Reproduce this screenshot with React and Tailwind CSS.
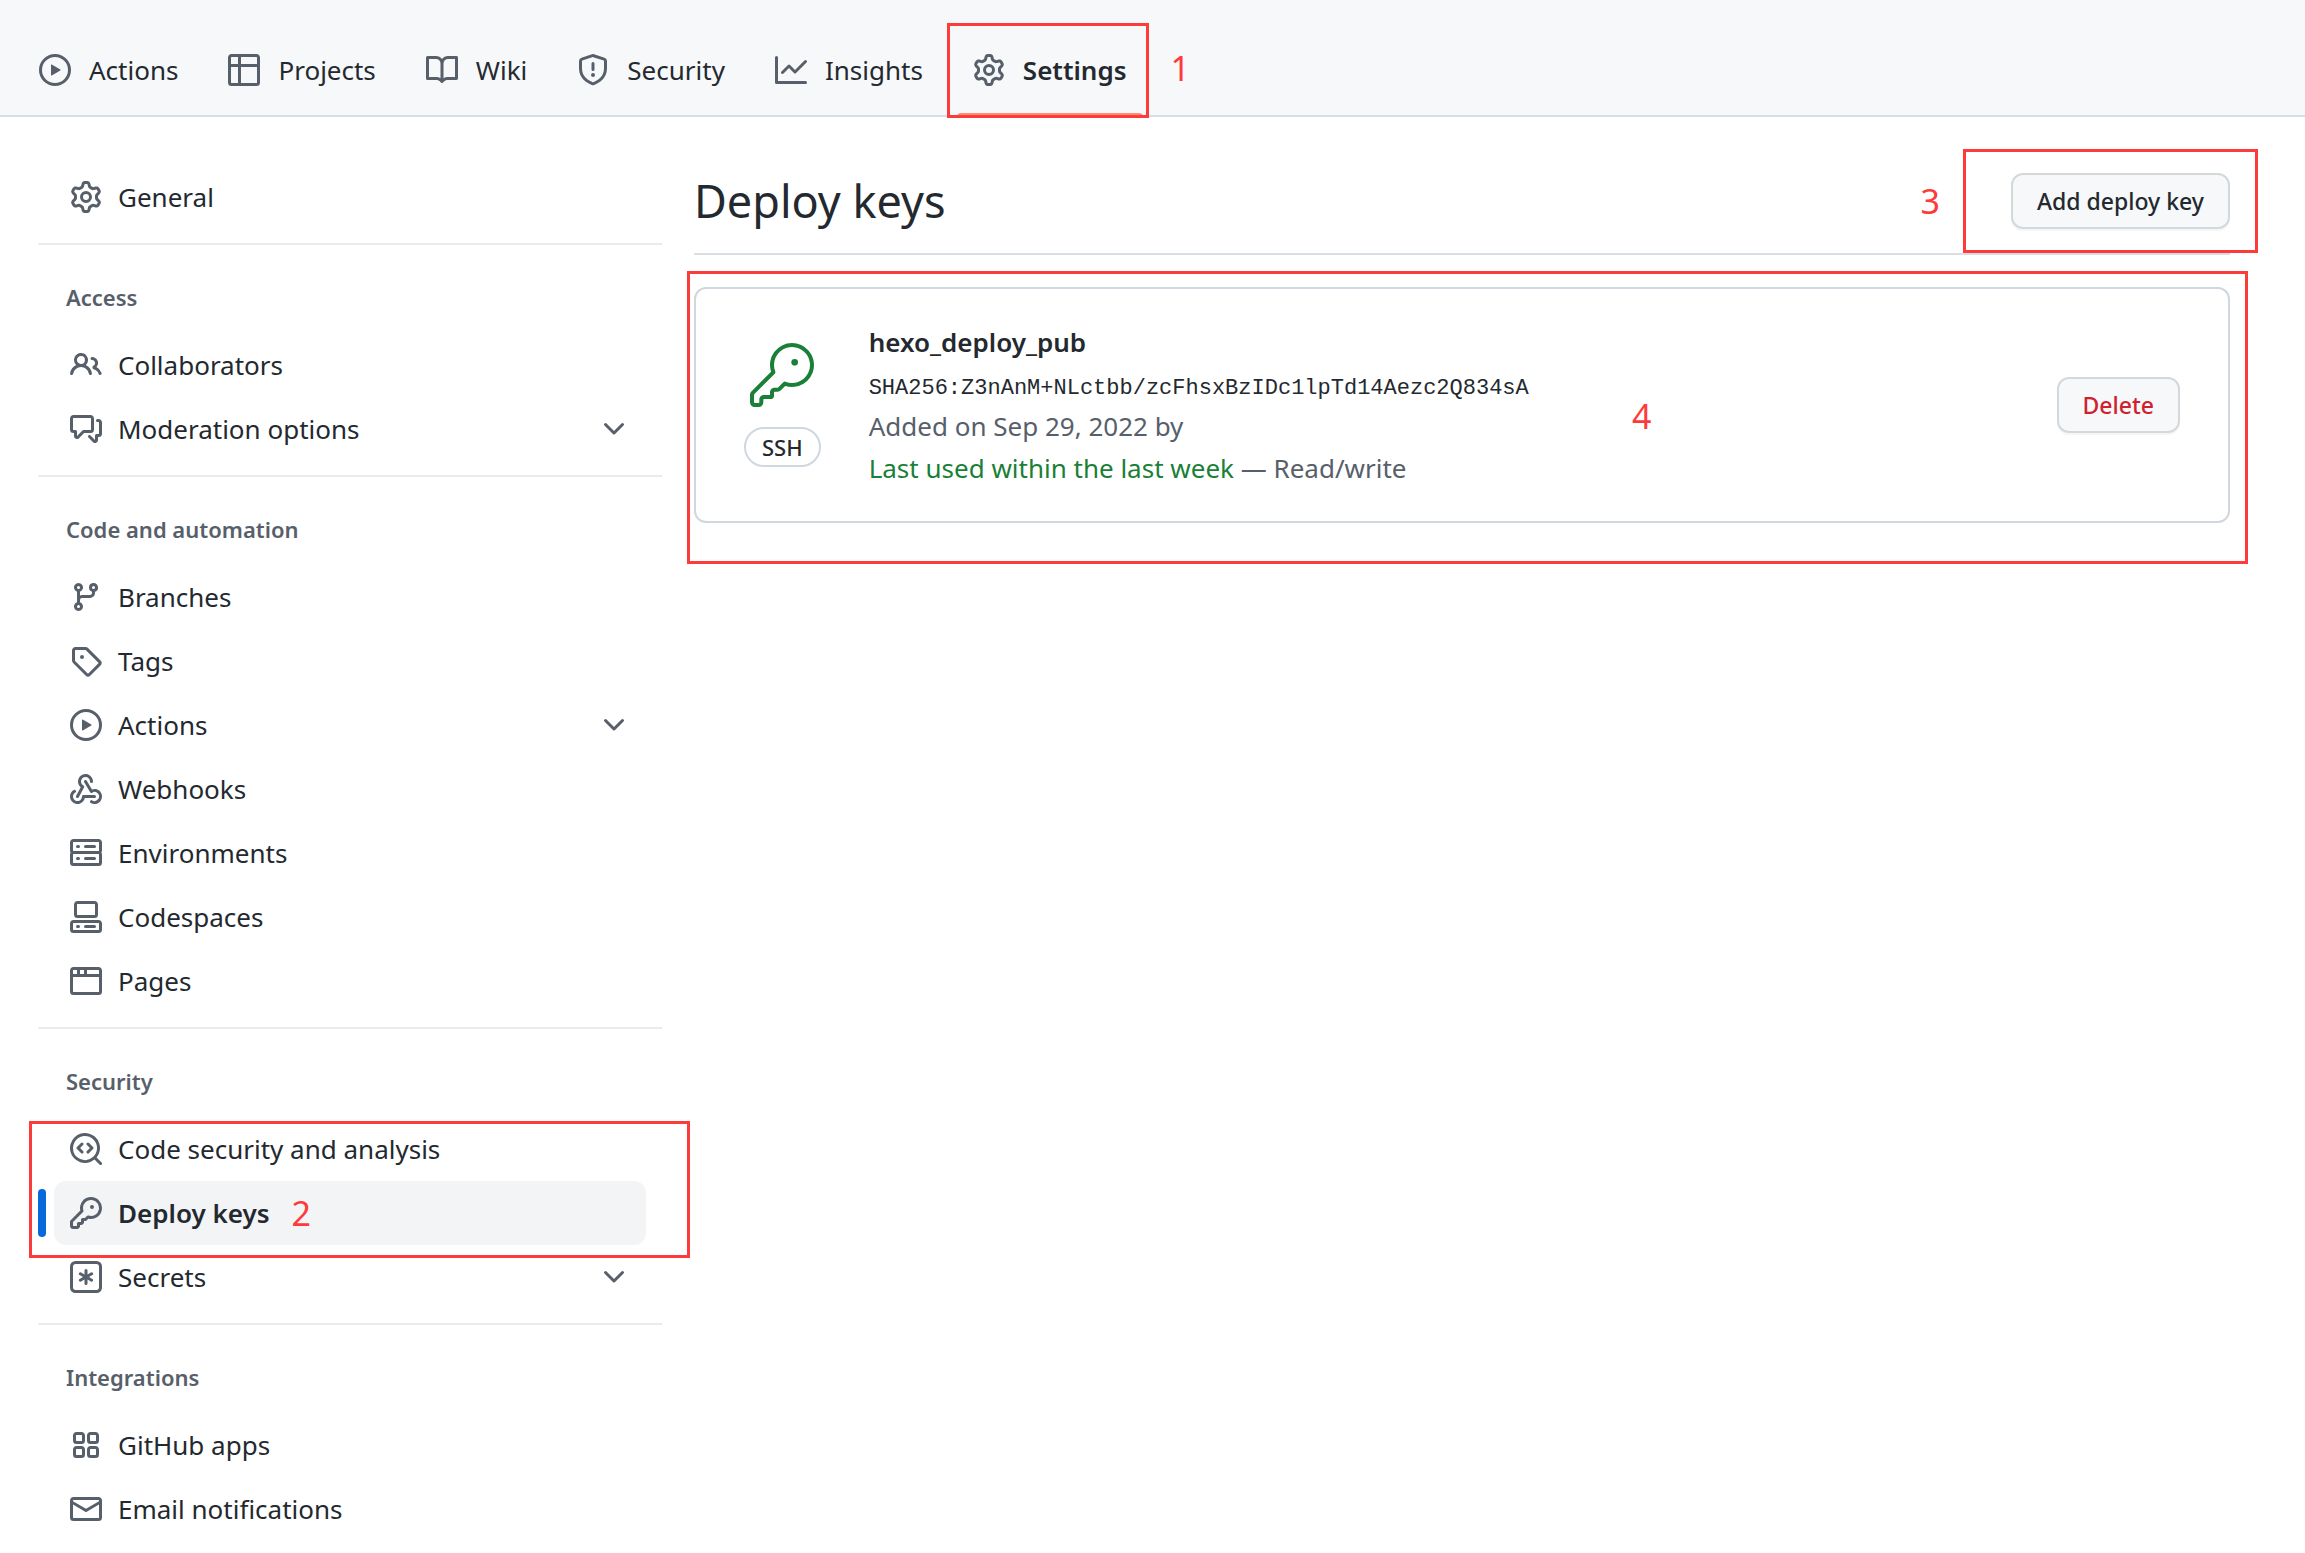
import React from "react";
import { GoKey } from "react-icons/go";

const paths = {
  play: "M8 0a8 8 0 1 1 0 16A8 8 0 0 1 8 0ZM1.5 8a6.5 6.5 0 1 0 13 0 6.5 6.5 0 0 0-13 0Zm4.879-2.773 4.264 2.559a.25.25 0 0 1 0 .428l-4.264 2.559A.25.25 0 0 1 6 10.559V5.442a.25.25 0 0 1 .379-.215Z",
  table: "M0 1.75C0 .784.784 0 1.75 0h12.5C15.216 0 16 .784 16 1.75v12.5A1.75 1.75 0 0 1 14.25 16H1.75A1.75 1.75 0 0 1 0 14.25ZM6.5 6.5v8h7.75a.25.25 0 0 0 .25-.25V6.5Zm8-1.5V1.75a.25.25 0 0 0-.25-.25H6.5V5Zm-13 1.5v7.75c0 .138.112.25.25.25H5v-8ZM5 5V1.5H1.75a.25.25 0 0 0-.25.25V5Z",
  book: "M0 1.75A.75.75 0 0 1 .75 1h4.253c1.227 0 2.317.59 3 1.501A3.743 3.743 0 0 1 11.006 1h4.245a.75.75 0 0 1 .75.75v10.5a.75.75 0 0 1-.75.75h-4.507a2.25 2.25 0 0 0-1.591.659l-.622.621a.75.75 0 0 1-1.06 0l-.622-.621A2.25 2.25 0 0 0 5.258 13H.75a.75.75 0 0 1-.75-.75Zm7.251 10.324.004-5.073-.002-2.253A2.25 2.25 0 0 0 5.003 2.5H1.5v9h3.757a3.75 3.75 0 0 1 1.994.574ZM8.755 4.75l-.004 7.322a3.752 3.752 0 0 1 1.992-.572H14.5v-9h-3.495a2.25 2.25 0 0 0-2.25 2.25Z",
  shield: "M7.467.133a1.748 1.748 0 0 1 1.066 0l5.25 1.68A1.75 1.75 0 0 1 15 3.48V7c0 1.566-.32 3.182-1.303 4.682-.983 1.498-2.585 2.813-5.032 3.855a1.697 1.697 0 0 1-1.33 0c-2.447-1.042-4.049-2.357-5.032-3.855C1.32 10.182 1 8.566 1 7V3.48a1.75 1.75 0 0 1 1.217-1.667Zm.61 1.429a.25.25 0 0 0-.153 0l-5.25 1.68a.25.25 0 0 0-.174.238V7c0 1.358.275 2.666 1.057 3.86.784 1.194 2.121 2.34 4.366 3.297a.196.196 0 0 0 .154 0c2.245-.956 3.582-2.104 4.366-3.298C13.225 9.666 13.5 8.36 13.5 7V3.48a.251.251 0 0 0-.174-.237l-5.25-1.68ZM8.75 4.75v3a.75.75 0 0 1-1.5 0v-3a.75.75 0 0 1 1.5 0ZM9 10.5a1 1 0 1 1-2 0 1 1 0 0 1 2 0Z",
  graph: "M1.5 1.75V13.5h13.75a.75.75 0 0 1 0 1.5H.75a.75.75 0 0 1-.75-.75V1.75a.75.75 0 0 1 1.5 0Zm14.28 2.53-5.25 5.25a.75.75 0 0 1-1.06 0L7 7.06 4.28 9.78a.751.751 0 0 1-1.042-.018.751.751 0 0 1-.018-1.042l3.25-3.25a.75.75 0 0 1 1.06 0L10 7.94l4.72-4.72a.751.751 0 0 1 1.042.018.751.751 0 0 1 .018 1.042Z",
  gear: "M8 0a8.2 8.2 0 0 1 .701.031C9.444.095 9.99.645 10.16 1.29l.288 1.107c.018.066.079.158.212.224.231.114.454.243.668.386.123.082.233.09.299.071l1.103-.303c.644-.176 1.392.021 1.82.63.27.385.506.792.704 1.218.315.675.111 1.422-.364 1.891l-.814.806c-.049.048-.098.147-.088.294.016.257.016.515 0 .772-.01.147.038.246.088.294l.814.806c.475.469.679 1.216.364 1.891a7.977 7.977 0 0 1-.704 1.217c-.428.61-1.176.807-1.82.63l-1.102-.302c-.067-.019-.177-.011-.3.071a5.909 5.909 0 0 1-.668.386c-.133.066-.194.158-.211.224l-.29 1.106c-.168.646-.715 1.196-1.458 1.26a8.006 8.006 0 0 1-1.402 0c-.743-.064-1.289-.614-1.458-1.26l-.289-1.106c-.018-.066-.079-.158-.212-.224a5.738 5.738 0 0 1-.668-.386c-.123-.082-.233-.09-.299-.071l-1.103.303c-.644.176-1.392-.021-1.82-.63a8.12 8.12 0 0 1-.704-1.218c-.315-.675-.111-1.422.363-1.891l.815-.806c.05-.048.098-.147.088-.294a6.214 6.214 0 0 1 0-.772c.01-.147-.038-.246-.088-.294l-.815-.806C.635 6.045.431 5.298.746 4.623a7.92 7.92 0 0 1 .704-1.217c.428-.61 1.176-.807 1.82-.63l1.102.302c.067.019.177.011.3-.071.214-.143.437-.272.668-.386.133-.066.194-.158.211-.224l.29-1.106C6.009.645 6.556.095 7.299.03 7.53.01 7.764 0 8 0Zm-.571 1.525c-.036.003-.108.036-.137.146l-.289 1.105c-.147.561-.549.967-.998 1.189-.173.086-.34.183-.5.29-.417.278-.97.423-1.529.27l-1.103-.303c-.109-.03-.175.016-.195.045-.22.312-.412.644-.573.99-.014.031-.021.11.059.19l.815.806c.411.406.562.957.53 1.456a4.709 4.709 0 0 0 0 .582c.032.499-.119 1.05-.53 1.456l-.815.806c-.081.08-.073.159-.059.19.162.346.353.677.573.989.02.03.085.076.195.046l1.102-.303c.56-.153 1.113-.008 1.53.27.161.107.328.204.501.29.447.222.85.629.997 1.189l.289 1.105c.029.109.101.143.137.146a6.6 6.6 0 0 0 1.142 0c.036-.003.108-.036.137-.146l.289-1.105c.147-.561.549-.967.998-1.189.173-.086.34-.183.5-.29.417-.278.97-.423 1.529-.27l1.103.303c.109.029.175-.016.195-.045.22-.313.411-.644.573-.99.014-.031.021-.11-.059-.19l-.815-.806c-.411-.406-.562-.957-.53-1.456a4.709 4.709 0 0 0 0-.582c-.032-.499.119-1.05.53-1.456l.815-.806c.081-.08.073-.159.059-.19a6.464 6.464 0 0 0-.573-.989c-.02-.03-.085-.076-.195-.046l-1.102.303c-.56.153-1.113.008-1.53-.27a4.44 4.44 0 0 0-.501-.29c-.447-.222-.85-.629-.997-1.189l-.289-1.105c-.029-.11-.101-.143-.137-.146a6.6 6.6 0 0 0-1.142 0ZM11 8a3 3 0 1 1-6 0 3 3 0 0 1 6 0ZM9.5 8a1.5 1.5 0 1 0-3.001.001A1.5 1.5 0 0 0 9.5 8Z",
  people: "M2 5.5a3.5 3.5 0 1 1 5.898 2.549 5.508 5.508 0 0 1 3.034 4.084.75.75 0 1 1-1.482.235 4 4 0 0 0-7.9 0 .75.75 0 0 1-1.482-.236A5.507 5.507 0 0 1 3.102 8.05 3.493 3.493 0 0 1 2 5.5ZM11 4a3.001 3.001 0 0 1 2.22 5.018 5.01 5.01 0 0 1 2.56 3.012.749.749 0 0 1-.885.954.752.752 0 0 1-.549-.514 3.507 3.507 0 0 0-2.522-2.372.75.75 0 0 1-.574-.73v-.352a.75.75 0 0 1 .416-.672A1.5 1.5 0 0 0 11 5.5.75.75 0 0 1 11 4Zm-5.5-.5a2 2 0 1 0-.001 3.999A2 2 0 0 0 5.5 3.5Z",
  discussion: "M1.75 1h8.5c.966 0 1.75.784 1.75 1.75v5.5A1.75 1.75 0 0 1 10.25 10H7.061l-2.574 2.573A1.458 1.458 0 0 1 2 11.543V10h-.25A1.75 1.75 0 0 1 0 8.25v-5.5C0 1.784.784 1 1.75 1ZM1.5 2.75v5.5c0 .138.112.25.25.25h1a.75.75 0 0 1 .75.75v2.19l2.72-2.72a.749.749 0 0 1 .53-.22h3.5a.25.25 0 0 0 .25-.25v-5.5a.25.25 0 0 0-.25-.25h-8.5a.25.25 0 0 0-.25.25Zm13 2a.25.25 0 0 0-.25-.25h-.5a.75.75 0 0 1 0-1.5h.5c.966 0 1.75.784 1.75 1.75v5.5A1.75 1.75 0 0 1 14.25 12H14v1.543a1.458 1.458 0 0 1-2.487 1.03L9.22 12.28a.749.749 0 0 1 .326-1.275.749.749 0 0 1 .734.215l2.22 2.22v-2.19a.75.75 0 0 1 .75-.75h1a.25.25 0 0 0 .25-.25Z",
  chevron: "M12.78 5.22a.749.749 0 0 1 0 1.06l-4.25 4.25a.749.749 0 0 1-1.06 0L3.22 6.28a.749.749 0 1 1 1.06-1.06L8 8.939l3.72-3.719a.749.749 0 0 1 1.06 0Z",
  branch: "M9.5 3.25a2.25 2.25 0 1 1 3 2.122V6A2.5 2.5 0 0 1 10 8.5H6a1 1 0 0 0-1 1v1.128a2.251 2.251 0 1 1-1.5 0V5.372a2.25 2.25 0 1 1 1.5 0v1.836A2.493 2.493 0 0 1 6 7h4a1 1 0 0 0 1-1v-.628A2.25 2.25 0 0 1 9.5 3.25Zm-6 0a.75.75 0 1 0 1.5 0 .75.75 0 0 0-1.5 0Zm8.25-.75a.75.75 0 1 0 0 1.5.75.75 0 0 0 0-1.5ZM4.25 12a.75.75 0 1 0 0 1.5.75.75 0 0 0 0-1.5Z",
  tag: "M1 7.775V2.75C1 1.784 1.784 1 2.75 1h5.025c.464 0 .91.184 1.238.513l6.25 6.25a1.75 1.75 0 0 1 0 2.474l-5.026 5.026a1.75 1.75 0 0 1-2.474 0l-6.25-6.25A1.752 1.752 0 0 1 1 7.775Zm1.5 0c0 .066.026.13.073.177l6.25 6.25a.25.25 0 0 0 .354 0l5.025-5.025a.25.25 0 0 0 0-.354l-6.25-6.25a.25.25 0 0 0-.177-.073H2.75a.25.25 0 0 0-.25.25ZM6 5a1 1 0 1 1 0 2 1 1 0 0 1 0-2Z",
  webhook: "M5.5 4.25a2.25 2.25 0 0 1 4.5 0 .75.75 0 0 0 1.5 0 3.75 3.75 0 1 0-6.14 2.889l-2.272 4.258a.75.75 0 0 0 1.324.706L7 7.25a.75.75 0 0 0-.309-1.015A2.25 2.25 0 0 1 5.5 4.25ZM7.364 3.607a.75.75 0 0 1 1.03.257l2.608 4.349a3.75 3.75 0 1 1-.628 6.785.75.75 0 0 1 .752-1.299 2.25 2.25 0 1 0-.033-3.88.75.75 0 0 1-1.03-.256L7.107 4.636a.75.75 0 0 1 .257-1.03ZM2.9 8.776A.75.75 0 0 1 2.625 9.8 2.25 2.25 0 1 0 6 11.75a.75.75 0 0 1 .75-.751h5.5a.75.75 0 0 1 0 1.5H7.425a3.751 3.751 0 1 1-5.55-3.998.75.75 0 0 1 1.024.274Z",
  server: "M1.75 1h12.5c.966 0 1.75.784 1.75 1.75v4c0 .372-.116.717-.314 1 .198.283.314.628.314 1v4a1.75 1.75 0 0 1-1.75 1.75H1.75A1.75 1.75 0 0 1 0 12.75v-4c0-.358.109-.707.314-1a1.739 1.739 0 0 1-.314-1v-4C0 1.784.784 1 1.75 1ZM1.5 2.75v4c0 .138.112.25.25.25h12.5a.25.25 0 0 0 .25-.25v-4a.25.25 0 0 0-.25-.25H1.75a.25.25 0 0 0-.25.25Zm.25 5.75a.25.25 0 0 0-.25.25v4c0 .138.112.25.25.25h12.5a.25.25 0 0 0 .25-.25v-4a.25.25 0 0 0-.25-.25ZM7 4.75A.75.75 0 0 1 7.75 4h4.5a.75.75 0 0 1 0 1.5h-4.5A.75.75 0 0 1 7 4.75ZM7.75 10h4.5a.75.75 0 0 1 0 1.5h-4.5a.75.75 0 0 1 0-1.5ZM3 4.75A.75.75 0 0 1 3.75 4h.5a.75.75 0 0 1 0 1.5h-.5A.75.75 0 0 1 3 4.75ZM3.75 10h.5a.75.75 0 0 1 0 1.5h-.5a.75.75 0 0 1 0-1.5Z",
  codespaces: "M0 11.25c0-.966.784-1.75 1.75-1.75h12.5c.966 0 1.75.784 1.75 1.75v3A1.75 1.75 0 0 1 14.25 16H1.75A1.75 1.75 0 0 1 0 14.25Zm2-9.5C2 .784 2.784 0 3.75 0h8.5C13.216 0 14 .784 14 1.75v5a1.75 1.75 0 0 1-1.75 1.75h-8.5A1.75 1.75 0 0 1 2 6.75Zm1.75-.25a.25.25 0 0 0-.25.25v5c0 .138.112.25.25.25h8.5a.25.25 0 0 0 .25-.25v-5a.25.25 0 0 0-.25-.25Zm-2 9.5a.25.25 0 0 0-.25.25v3c0 .138.112.25.25.25h12.5a.25.25 0 0 0 .25-.25v-3a.25.25 0 0 0-.25-.25ZM7 12.75a.75.75 0 0 1 .75-.75h4.5a.75.75 0 0 1 0 1.5h-4.5a.75.75 0 0 1-.75-.75Zm-4 0a.75.75 0 0 1 .75-.75h.5a.75.75 0 0 1 0 1.5h-.5a.75.75 0 0 1-.75-.75Z",
  browser: "M0 2.75C0 1.784.784 1 1.75 1h12.5c.966 0 1.75.784 1.75 1.75v10.5A1.75 1.75 0 0 1 14.25 15H1.75A1.75 1.75 0 0 1 0 13.25ZM14.5 6h-13v7.25c0 .138.112.25.25.25h12.5a.25.25 0 0 0 .25-.25Zm-6-3.5v2h6V2.75a.25.25 0 0 0-.25-.25ZM5 2.5v2h2v-2Zm-3.25 0a.25.25 0 0 0-.25.25V4.5h2v-2Z",
  codescan: "M8.47 4.97a.75.75 0 0 0 0 1.06L9.94 7.5 8.47 8.97a.75.75 0 1 0 1.06 1.06l2-2a.75.75 0 0 0 0-1.06l-2-2a.75.75 0 0 0-1.06 0ZM6.53 6.03a.75.75 0 0 0-1.06-1.06l-2 2a.75.75 0 0 0 0 1.06l2 2a.75.75 0 1 0 1.06-1.06L5.06 7.5l1.47-1.47ZM12.246 13.307a7.501 7.501 0 1 1 1.06-1.06l2.474 2.473a.75.75 0 1 1-1.06 1.06l-2.474-2.473ZM1.5 7.5a6.002 6.002 0 0 0 3.608 5.504 6.002 6.002 0 0 0 6.486-1.117.748.748 0 0 1 .292-.293A6 6 0 1 0 1.5 7.5Z",
  key: "M10.5 0a5.499 5.499 0 1 1-1.288 10.848l-.932.932a.749.749 0 0 1-.53.22H7v.75a.749.749 0 0 1-.22.53l-.5.5a.749.749 0 0 1-.53.22H5v.75a.749.749 0 0 1-.22.53l-.5.5a.749.749 0 0 1-.53.22h-2A1.75 1.75 0 0 1 0 14.25v-2c0-.199.079-.389.22-.53l4.932-4.932A5.5 5.5 0 0 1 10.5 0Zm-4 5.5c-.001.431.069.86.205 1.269a.75.75 0 0 1-.181.768L1.5 12.56v1.69c0 .138.112.25.25.25h1.69l.06-.06v-1.19a.75.75 0 0 1 .75-.75h1.19l.06-.06v-1.19a.75.75 0 0 1 .75-.75h1.19l1.023-1.025a.75.75 0 0 1 .768-.18A4 4 0 1 0 6.5 5.5ZM11 6a1 1 0 1 1 0-2 1 1 0 0 1 0 2Z",
  asterisk: "M0 2.75A2.75 2.75 0 0 1 2.75 0h10.5A2.75 2.75 0 0 1 16 2.75v10.5A2.75 2.75 0 0 1 13.25 16H2.75A2.75 2.75 0 0 1 0 13.25ZM2.75 1.5c-.69 0-1.25.56-1.25 1.25v10.5c0 .69.56 1.25 1.25 1.25h10.5c.69 0 1.25-.56 1.25-1.25V2.75c0-.69-.56-1.25-1.25-1.25ZM8 4a.75.75 0 0 1 .75.75V6.7l1.69-.975a.75.75 0 0 1 .75 1.3L9.5 8l1.69.976a.75.75 0 0 1-.75 1.298L8.75 9.3v1.951a.75.75 0 0 1-1.5 0V9.299l-1.69.976a.75.75 0 0 1-.75-1.3L6.5 8l-1.69-.975a.75.75 0 0 1 .75-1.3l1.69.976V4.75A.75.75 0 0 1 8 4Z",
  apps: "M1.5 3.25c0-.966.784-1.75 1.75-1.75h2.5c.966 0 1.75.784 1.75 1.75v2.5A1.75 1.75 0 0 1 5.75 7.5h-2.5A1.75 1.75 0 0 1 1.5 5.75Zm7 0c0-.966.784-1.75 1.75-1.75h2.5c.966 0 1.75.784 1.75 1.75v2.5a1.75 1.75 0 0 1-1.75 1.75h-2.5A1.75 1.75 0 0 1 8.5 5.75Zm-7 7c0-.966.784-1.75 1.75-1.75h2.5c.966 0 1.75.784 1.75 1.75v2.5a1.75 1.75 0 0 1-1.75 1.75h-2.5a1.75 1.75 0 0 1-1.75-1.75Zm7 0c0-.966.784-1.75 1.75-1.75h2.5c.966 0 1.75.784 1.75 1.75v2.5a1.75 1.75 0 0 1-1.75 1.75h-2.5a1.75 1.75 0 0 1-1.75-1.75ZM3.25 3a.25.25 0 0 0-.25.25v2.5c0 .138.112.25.25.25h2.5A.25.25 0 0 0 6 5.75v-2.5A.25.25 0 0 0 5.75 3Zm7 0a.25.25 0 0 0-.25.25v2.5c0 .138.112.25.25.25h2.5a.25.25 0 0 0 .25-.25v-2.5a.25.25 0 0 0-.25-.25Zm-7 7a.25.25 0 0 0-.25.25v2.5c0 .138.112.25.25.25h2.5a.25.25 0 0 0 .25-.25v-2.5a.25.25 0 0 0-.25-.25Zm7 0a.25.25 0 0 0-.25.25v2.5c0 .138.112.25.25.25h2.5a.25.25 0 0 0 .25-.25v-2.5a.25.25 0 0 0-.25-.25Z",
  mail: "M1.75 2h12.5c.966 0 1.75.784 1.75 1.75v8.5A1.75 1.75 0 0 1 14.25 14H1.75A1.75 1.75 0 0 1 0 12.25v-8.5C0 2.784.784 2 1.75 2ZM1.5 12.251c0 .138.112.25.25.25h12.5a.25.25 0 0 0 .25-.25V5.809L8.38 9.397a.75.75 0 0 1-.76 0L1.5 5.809v6.442Zm13-8.181v-.32a.25.25 0 0 0-.25-.25H1.75a.25.25 0 0 0-.25.25v.32L8 7.88Z",
};

function Icon({ name }) {
  return (
    <svg viewBox="0 0 16 16" className="size-8 shrink-0 fill-[#57606a]" aria-hidden="true">
      <path d={paths[name]} />
    </svg>
  );
}

// Red outline laid over a part of the page; `place` holds its inset classes.
function Outline({ place }) {
  return <span aria-hidden="true" className={`pointer-events-none absolute z-10 border-3 border-[#fe3b3b] ${place}`} />;
}

function Mark({ children, place }) {
  return <span className={`absolute text-[34px] leading-10 font-normal text-[#fe3b3b] ${place}`}>{children}</span>;
}

const tabs = [
  { icon: "play", label: "Actions" },
  { icon: "table", label: "Projects" },
  { icon: "book", label: "Wiki" },
  { icon: "shield", label: "Security" },
  { icon: "graph", label: "Insights" },
];

function Header() {
  return (
    <header className="border-b-2 border-[#d8dee4] bg-[#f6f8fa] pt-6">
      <nav className="flex gap-[18px] px-[23px]" aria-label="Repository">
        {tabs.map((t) => (
          <a key={t.label} href="#" className="flex h-[91px] items-center gap-[18px] px-4">
            <Icon name={t.icon} />
            {t.label}
          </a>
        ))}
        <a href="#" aria-current="page" className="relative flex h-[91px] items-center gap-[18px] px-4 font-semibold">
          <Icon name="gear" />
          Settings
          <span className="absolute inset-x-0 -bottom-0.5 h-1 rounded-t-sm bg-[#fd8c73]" />
          <Outline place="-left-2.5 -right-1.5 -top-px -bottom-[3px]" />
          <Mark place="left-full top-6 ml-7">1</Mark>
        </a>
      </nav>
    </header>
  );
}

function Item({ icon, label, more, current, mark }) {
  const body = (
    <>
      <Icon name={icon} />
      <span className="grow text-left">{label}</span>
      {more && <Icon name="chevron" />}
    </>
  );
  if (more) {
    return (
      <li className="px-4">
        <button type="button" aria-expanded="false" className="flex h-16 w-full items-center gap-4 rounded-xl px-4">
          {body}
        </button>
      </li>
    );
  }
  if (current) {
    return (
      <li className="relative px-4">
        <span className="absolute left-0 top-2 h-12 w-2 rounded-md bg-[#0969da]" />
        <a href="#" aria-current="page" className="flex h-16 items-center gap-4 rounded-xl bg-[#f3f4f6] px-4 font-semibold">
          <Icon name={icon} />
          <span className="relative">
            {label}
            <Mark place="left-full top-0 ml-[22px]">{mark}</Mark>
          </span>
        </a>
      </li>
    );
  }
  return (
    <li className="px-4">
      <a href="#" className="flex h-16 items-center gap-4 rounded-xl px-4">
        {body}
      </a>
    </li>
  );
}

function Section({ title, children }) {
  return (
    <section className="mt-3.5 border-t-2 border-[#e8ebef]">
      <h2 className="px-7 pt-[34px] pb-[18px] text-[22px] leading-9 font-semibold text-[#57606a]">{title}</h2>
      {children}
    </section>
  );
}

function Sidebar() {
  return (
    <nav className="w-[624px] shrink-0 pt-12" aria-label="Settings">
      <ul>
        <Item icon="gear" label="General" />
      </ul>
      <Section title="Access">
        <ul>
          <Item icon="people" label="Collaborators" />
          <Item icon="discussion" label="Moderation options" more />
        </ul>
      </Section>
      <Section title="Code and automation">
        <ul>
          <Item icon="branch" label="Branches" />
          <Item icon="tag" label="Tags" />
          <Item icon="play" label="Actions" more />
          <Item icon="webhook" label="Webhooks" />
          <Item icon="server" label="Environments" />
          <Item icon="codespaces" label="Codespaces" />
          <Item icon="browser" label="Pages" />
        </ul>
      </Section>
      <Section title="Security">
        <div className="relative">
          <ul>
            <Item icon="codescan" label="Code security and analysis" />
            <Item icon="key" label="Deploy keys" current mark="2" />
          </ul>
          <Outline place="-left-[9px] -right-7 top-1 -bottom-[13px]" />
        </div>
        <ul>
          <Item icon="asterisk" label="Secrets" more />
        </ul>
      </Section>
      <Section title="Integrations">
        <ul>
          <Item icon="apps" label="GitHub apps" />
          <Item icon="mail" label="Email notifications" />
        </ul>
      </Section>
    </nav>
  );
}

const buttonClass =
  "h-14 rounded-xl border-2 border-[#d5d8da] bg-[#f6f8fa] px-6 text-[23px] leading-10 font-medium shadow-[0_2px_0_rgba(31,35,40,0.04)]";

function DeployKeys() {
  return (
    <main className="min-w-0 grow pt-14">
      <div className="flex items-start justify-between border-b-2 border-[#d8dee4] pb-6">
        <h1 className="text-[45px] leading-14">Deploy keys</h1>
        <div className="relative">
          <button type="button" className={buttonClass}>
            Add deploy key
          </button>
          <Outline place="-left-12 -right-7 -top-6 -bottom-6" />
          <Mark place="right-full top-2 mr-[71px]">3</Mark>
        </div>
      </div>
      <div className="relative mt-8">
        <article className="flex items-center gap-12 rounded-xl border-2 border-[#d0d7de] px-12 py-8">
          <div className="flex flex-col items-center gap-5">
            <GoKey className="size-16 text-[#1a7f37]" aria-hidden="true" />
            <span className="rounded-full border-2 border-[#d0d7de] px-4 text-[22px] leading-9 font-medium">SSH</span>
          </div>
          <div className="min-w-0 grow leading-[42px] text-[#57606a]">
            <h3 className="font-semibold text-[#24292f]">hexo_deploy_pub</h3>
            <code className="block pt-2.5 font-['Liberation_Mono',monospace] text-[22px] leading-8 text-[#24292f]">
              SHA256:Z3nAnM+NLctbb/zcFhsxBzIDc1lpTd14Aezc2Q834sA
            </code>
            <p>Added on Sep 29, 2022 by</p>
            <p>
              <span className="text-[#1a7f37]">Last used within the last week</span> — Read/write
            </p>
          </div>
          <button type="button" className={`${buttonClass} text-[#cf222e]`}>
            Delete
          </button>
        </article>
        <Outline place="-left-[7px] -right-[18px] -top-4 -bottom-[41px]" />
        <Mark place="left-[938px] top-[109px]">4</Mark>
      </div>
    </main>
  );
}

export default function App() {
  return (
    <div className="min-h-screen overflow-hidden bg-white font-['Noto_Sans',sans-serif] text-[26px] leading-10 text-[#24292f]">
      <Header />
      <div className="flex gap-8 pr-[75px] pl-[38px]">
        <Sidebar />
        <DeployKeys />
      </div>
    </div>
  );
}
